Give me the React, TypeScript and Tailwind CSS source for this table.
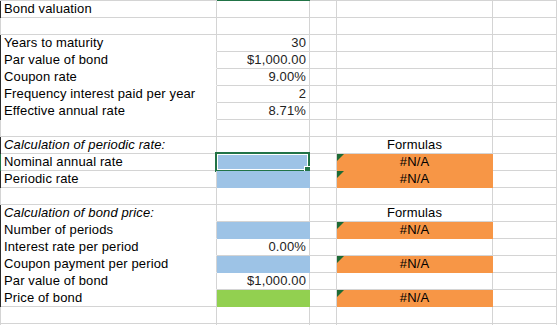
import React from "react";

type Row = {
  label?: string;
  italic?: boolean;
  edge?: "dark" | "gray" | "green";
  noLines?: boolean;
  b?: string;
  bFill?: string;
  d?: string;
  dFill?: string;
  flag?: boolean;
  selected?: boolean;
};

const BLUE = "#9dc3e6";
const ORANGE = "#f79646";
const GREEN = "#92d050";

const rows: Row[] = [
  { label: "Bond valuation", edge: "dark" },
  { edge: "gray" },
  { label: "Years to maturity", edge: "dark", noLines: true, b: "30" },
  { label: "Par value of bond", edge: "dark", noLines: true, b: "$1,000.00" },
  { label: "Coupon rate", edge: "dark", noLines: true, b: "9.00%" },
  { label: "Frequency interest paid per year", edge: "dark", noLines: true, b: "2" },
  { label: "Effective annual rate", edge: "dark", noLines: true, b: "8.71%" },
  { edge: "gray" },
  { label: "Calculation of periodic rate:", italic: true, edge: "dark", d: "Formulas" },
  { label: "Nominal annual rate", edge: "green", bFill: BLUE, d: "#N/A", dFill: ORANGE, flag: true, selected: true },
  { label: "Periodic rate", edge: "dark", bFill: BLUE, d: "#N/A", dFill: ORANGE, flag: true },
  { edge: "gray" },
  { label: "Calculation of bond price:", italic: true, edge: "dark", noLines: true, d: "Formulas" },
  { label: "Number of periods", edge: "dark", noLines: true, bFill: BLUE, d: "#N/A", dFill: ORANGE, flag: true },
  { label: "Interest rate per period", edge: "dark", noLines: true, b: "0.00%" },
  { label: "Coupon payment per period", edge: "dark", noLines: true, bFill: BLUE, d: "#N/A", dFill: ORANGE, flag: true },
  { label: "Par value of bond", edge: "dark", noLines: true, b: "$1,000.00" },
  { label: "Price of bond", edge: "dark", bFill: GREEN, d: "#N/A", dFill: ORANGE, flag: true },
  { edge: "gray" },
  { edge: "gray" },
];

const edgeColor = {
  dark: "bg-[#2b2b2b]",
  gray: "bg-[#d4d4d4]",
  green: "bg-[#217346]",
};

function Cell({
  w,
  fill,
  bottomWhite,
  className = "",
  children,
}: {
  w: string;
  fill?: string;
  bottomWhite?: boolean;
  className?: string;
  children?: React.ReactNode;
}) {
  return (
    <div
      className={`${w} relative h-full shrink-0 border-r border-b border-[#d4d4d4] ${
        bottomWhite ? "border-b-white" : ""
      } ${className}`}
      style={fill ? { backgroundColor: fill, borderColor: fill } : undefined}
    >
      {children}
    </div>
  );
}

export default function App() {
  return (
    <div
      className="w-[557px] h-[325px] overflow-hidden bg-white text-[13px] leading-[16px] tracking-[0.13px] text-black"
      style={{ fontFamily: '"Liberation Sans", Arial, sans-serif' }}
    >
      {/* column header edge, B is the selected column */}
      <div className="flex h-px">
        <div className="w-[217px] bg-[#d4d4d4]" />
        <div className="w-[93px] bg-[#217346]" />
        <div className="flex-1 bg-[#d4d4d4]" />
      </div>

      {rows.map((r, idx) => (
        <div key={idx} className="flex h-[17px]">
          <div className={`w-px shrink-0 ${edgeColor[r.edge ?? "gray"]}`} />

          <Cell w="w-[216px]" bottomWhite={r.noLines} className="pl-[3px] whitespace-nowrap">
            <span className={r.italic ? "italic" : ""}>{r.label}</span>
          </Cell>

          <Cell w="w-[93px]" fill={r.bFill} className="pr-[3px] text-right text-[#222]">
            {r.b}
            {r.selected && (
              <div className="absolute -left-[2px] -top-[2px] w-[95px] h-[20px] border-2 border-[#217346] shadow-[inset_0_0_0_1px_white]">
                <div className="absolute left-[87px] top-[12px] w-[7px] h-[7px] bg-[#217346] border border-white" />
              </div>
            )}
          </Cell>

          <Cell w="w-[27px]" />

          <Cell w="w-[156px]" fill={r.dFill} className="text-center">
            {r.flag && (
              <div className="absolute left-0 top-0 w-0 h-0 border-t-[7px] border-r-[7px] border-t-[#1e6b35] border-r-transparent" />
            )}
            {r.d}
          </Cell>

          <Cell w="w-[64px]" />
        </div>
      ))}
    </div>
  );
}
